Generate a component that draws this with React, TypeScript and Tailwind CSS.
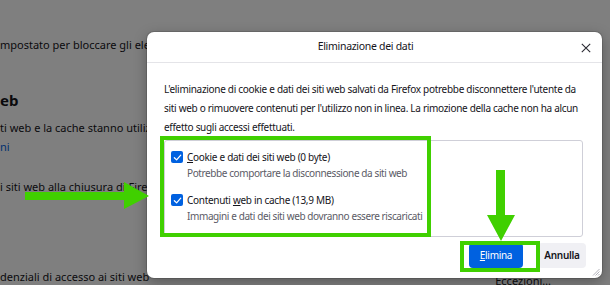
import React from "react";

const font = { fontFamily: '"Noto Sans", "Open Sans", sans-serif' };

function Check() {
  return (
    <span className="flex h-[12px] w-[12px] shrink-0 items-center justify-center rounded-[2px] bg-[#0061e0]">
      <svg width="9" height="9" viewBox="0 0 10 10" fill="none">
        <path d="M1.5 5.2 4 7.6 8.6 2.4" stroke="white" strokeWidth="1.4" strokeLinecap="round" strokeLinejoin="round" />
      </svg>
    </span>
  );
}

function Option({ label, hint }: { label: React.ReactNode; hint: string }) {
  return (
    <div className="flex flex-col">
      <div className="flex h-[16px] items-center gap-[4px]">
        <Check />
        <span className="whitespace-nowrap text-[#15141a]">{label}</span>
      </div>
      <div className="h-[16px] whitespace-nowrap pl-[16px] leading-[16px] tracking-[-0.4px] text-[#5b5b66]">{hint}</div>
    </div>
  );
}

function Page() {
  return (
    <div className="flex flex-col text-[11px] text-[#15141a]">
      <div className="mt-[37px] h-[16px] whitespace-nowrap leading-[16px]">mpostato per bloccare gli elem</div>
      <div className="mt-[37px] h-[20px] text-[15px] font-bold leading-[20px]">eb</div>
      <div className="mt-[10px] h-[16px] whitespace-nowrap leading-[16px]">ti web e la cache stanno utilizz</div>
      <div className="mt-[3px] h-[16px] leading-[16px] text-[#0061e0]">ni</div>
      <div className="mt-[24px] h-[16px] whitespace-nowrap leading-[16px]">i siti web alla chiusura di Firefox</div>
      <div className="mt-[74px] flex h-[16px] items-center whitespace-nowrap leading-[16px]">
        <span>denziali di accesso ai siti web</span>
        <span className="ml-[346px] mt-[8px]">Eccezioni…</span>
      </div>
    </div>
  );
}

export default function App() {
  return (
    <div className="relative h-[285px] w-[610px] overflow-hidden bg-white" style={font}>
      <Page />
      <div className="absolute inset-0 bg-black/50" />

      <div className="absolute left-[147px] top-[32px] flex h-[246px] w-[455px] flex-col rounded-[7px] bg-white text-[10px] tracking-[-0.3px] shadow-[0_0_0_1px_rgba(0,0,0,0.12),0_4px_14px_rgba(0,0,0,0.3)]">
        <div className="relative flex h-[31px] items-center justify-center border-b border-[#e4e4e8] pr-[18px] text-[10.5px] text-[#15141a]">
          Eliminazione dei dati
          <svg className="absolute right-[11px] top-[11px]" width="10" height="10" viewBox="0 0 10 10">
            <path d="M0.8 0.8 9.2 9.2M9.2 0.8 0.8 9.2" stroke="#2b2a33" strokeWidth="1.1" />
          </svg>
        </div>

        <div className="flex-1 px-[17px] pt-[17px]">
          <p className="whitespace-nowrap leading-[19px] text-[#15141a]">
            L'eliminazione di cookie e dati dei siti web salvati da Firefox potrebbe disconnettere l'utente da
            <br />
            siti web o rimuovere contenuti per l'utilizzo non in linea. La rimozione della cache non ha alcun
            <br />
            effetto sugli accessi effettuati.
          </p>
          <div className="mt-[3px] flex h-[97px] w-[419px] flex-col gap-[11px] rounded-[3px] border border-[#cfcfd8] pl-[6px] pt-[8px]">
            <Option
              label={<><u>C</u>ookie e dati dei siti web (0 byte)</>}
              hint="Potrebbe comportare la disconnessione da siti web"
            />
            <Option
              label={<>Contenuti <u>w</u>eb in cache (13,9 MB)</>}
              hint="Immagini e dati dei siti web dovranno essere riscaricati"
            />
          </div>
        </div>

        <div className="flex justify-end gap-[15px] pb-[10px] pr-[16px]">
          <button className="h-[25px] w-[54px] rounded-[4px] bg-[#0061e0] text-[10px] text-white">
            <u>E</u>limina
          </button>
          <button className="h-[25px] w-[48px] rounded-[4px] bg-[#f0f0f4] text-[10px] font-semibold text-[#15141a]">
            Annulla
          </button>
        </div>

        <svg className="absolute bottom-[2px] right-[2px]" width="8" height="8" viewBox="0 0 8 8">
          <path d="M7.5 1 1 7.5M7.5 3.5 3.5 7.5M7.5 6 6 7.5" stroke="#a0a0a8" strokeWidth="0.8" />
        </svg>

        <div className="absolute left-[13px] top-[104px] h-[101px] w-[271px] border-4 border-[#40d000]" />
        <div className="absolute left-[313px] top-[209px] h-[31px] w-[80px] border-4 border-[#40d000]" />
      </div>

      <svg className="absolute left-0 top-0" width="610" height="285" viewBox="0 0 610 285">
        <polygon points="25,192 124,192 124,182 149,196 124,209 124,200 25,200" fill="#40d000" />
        <polygon points="496,170 505,170 505,215 515,215 501,241 487,215 496,215" fill="#40d000" />
      </svg>
    </div>
  );
}
